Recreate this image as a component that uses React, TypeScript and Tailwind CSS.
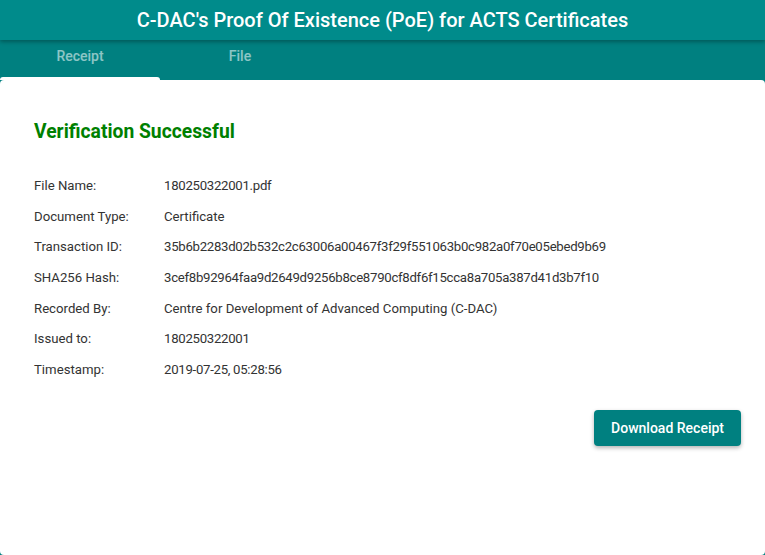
const rows: [string, string, boolean][] = [
  ["File Name:", "180250322001.pdf", true],
  ["Document Type:", "Certificate", false],
  ["Transaction ID:", "35b6b2283d02b532c2c63006a00467f3f29f551063b0c982a0f70e05ebed9b69", true],
  ["SHA256 Hash:", "3cef8b92964faa9d2649d9256b8ce8790cf8df6f15cca8a705a387d41d3b7f10", true],
  ["Recorded By:", "Centre for Development of Advanced Computing (C-DAC)", false],
  ["Issued to:", "180250322001", true],
  ["Timestamp:", "2019-07-25, 05:28:56", true],
];

export default function App() {
  return (
    <div className="flex h-[555px] w-[765px] flex-col overflow-hidden bg-[#008080] font-['Roboto',sans-serif]">
      <header className="relative z-10 flex h-10 shrink-0 items-center justify-center bg-[#008b8b] shadow-[0_2px_4px_rgba(0,0,0,0.3)]">
        <h1 className="text-[20px] font-medium text-white">
          C-DAC's Proof Of Existence (PoE) for ACTS Certificates
        </h1>
      </header>

      {/* tabs */}
      <nav className="flex h-10 shrink-0">
        <div className="relative flex w-40 items-start justify-center pt-[6px]">
          <span className="text-sm font-medium text-white/55">Receipt</span>
          <span className="absolute bottom-0 left-0 h-[3px] w-40 rounded-t-md bg-white" />
        </div>
        <div className="flex w-40 items-start justify-center pt-[6px]">
          <span className="text-sm font-medium text-white/55">File</span>
        </div>
      </nav>

      <main className="flex-1 rounded-sm bg-white px-[34px] pt-[40px]">
        <h2 className="text-[19.3px] font-bold leading-6 text-[#008000]">Verification Successful</h2>

        <div className="mt-[34px] flex flex-col gap-[14.7px] text-[13.2px] leading-4 text-[#333]">
          {rows.map(([label, value, digits]) => (
            <div key={label} className="flex">
              <span className="w-[130px] shrink-0">{label}</span>
              <span className={digits ? "tracking-[-0.28px]" : ""}>{value}</span>
            </div>
          ))}
        </div>

        <div className="mt-[32px] flex justify-end">
          <button className="mr-[-10px] h-9 rounded bg-[#008080] px-[17px] text-sm font-medium text-white shadow-[0_2px_4px_rgba(0,0,0,0.3)]">
            Download Receipt
          </button>
        </div>
      </main>
    </div>
  );
}
